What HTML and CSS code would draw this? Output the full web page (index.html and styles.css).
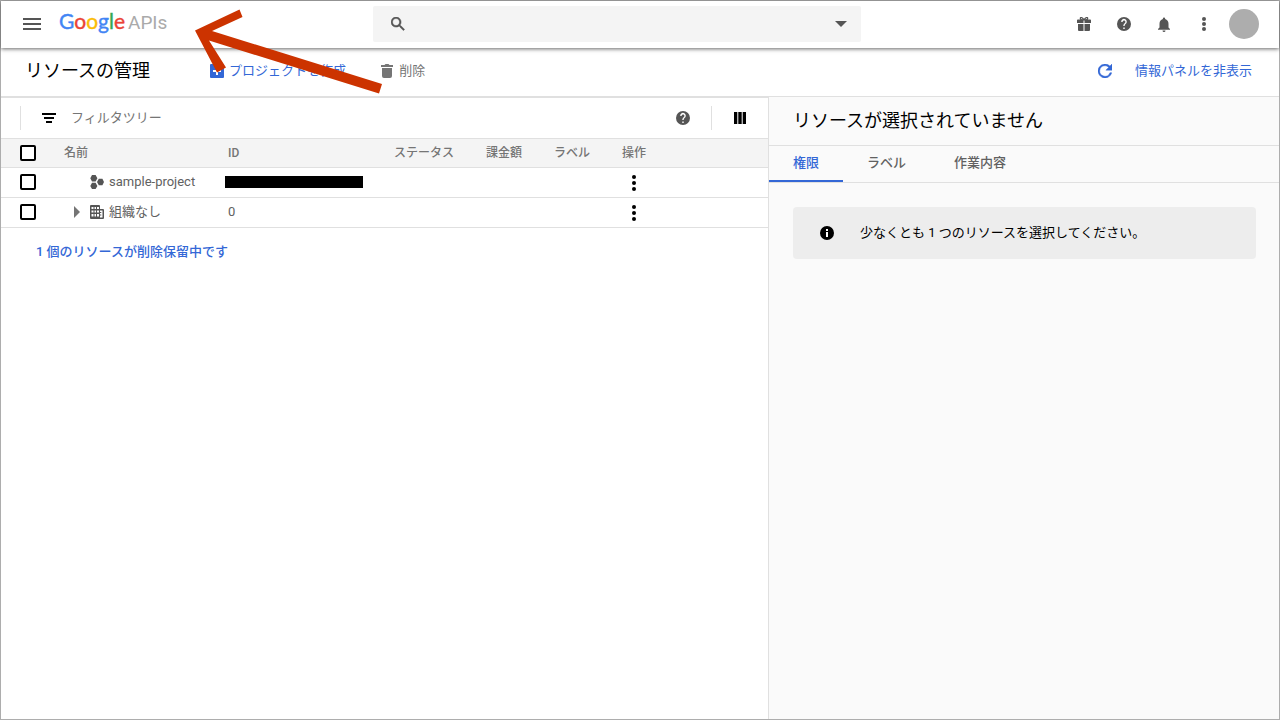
FILE: index.html
```html
<!DOCTYPE html>
<html lang="ja">
<head>
<meta charset="utf-8">
<title>リソースの管理</title>
<link rel="stylesheet" href="styles.css">
</head>
<body>
<div class="app">
  <header class="topbar">
    <div class="brand">
      <button class="icon-btn menu" aria-label="メニュー"><svg width="18" height="12" viewBox="0 0 18 12"><path d="M0 0h18v2H0zM0 5h18v2H0zM0 10h18v2H0z"/></svg></button>
      <a class="logo" href="#"><span class="google"><span class="blue">G</span><span class="red">o</span><span class="yellow">o</span><span class="blue">g</span><span class="green">l</span><span class="red">e</span></span><span class="apis">APIs</span></a>
    </div>
    <div class="search">
      <svg width="14" height="14" viewBox="3 3 18 18"><path d="M15.5 14h-.79l-.28-.27A6.47 6.47 0 0 0 16 9.500 6.500 6.500 0 1 0 9.500 16c1.610 0 3.090-.590 4.230-1.570l.27.280v.790l5 4.990L20.490 19l-4.990-5zm-6 0C7.010 14 5 11.990 5 9.500S7.010 5 9.500 5 14 7.010 14 9.500 11.990 14 9.500 14z" stroke="#555" stroke-width=".6"/></svg>
      <input class="search-input" type="text" aria-label="検索">
      <button class="icon-btn" aria-label="検索候補"><svg width="12" height="6" viewBox="0 0 12 6"><path d="M0 0h12L6 6z"/></svg></button>
    </div>
    <nav class="tools">
      <button class="icon-btn" aria-label="ギフト"><svg width="14" height="14" viewBox="0 0 14 14"><path d="M.8 2.500h12.400a.8.8 0 0 1 .8.800V6H7.500V3h-1v3H0V3.300a.8.8 0 0 1 .8-.8zM1 7h5.500v7H2a1 1 0 0 1-1-1zM7.500 7H13v6a1 1 0 0 1-1 1H7.500z"/><path d="M7 3C5.800.4 3.300-.2 3.300 1.400 3.300 2.500 4.500 3 7 3zM7 3C8.200.4 10.700-.2 10.700 1.400 10.700 2.500 9.500 3 7 3z" fill="none" stroke="#555" stroke-width="1.200"/></svg></button>
      <button class="icon-btn" aria-label="ヘルプ"><svg width="14" height="14" viewBox="2 2 20 20"><path d="M12 2a10 10 0 1 0 0 20 10 10 0 0 0 0-20zm1 17h-2v-2h2zm2.070-7.750-.9.920C13.450 12.900 13 13.500 13 15h-2v-.5c0-1.100.450-2.100 1.170-2.830l1.240-1.260A2 2 0 1 0 10 9H8a4 4 0 1 1 7.070 2.250z"/></svg></button>
      <button class="icon-btn" aria-label="通知"><svg width="12" height="15" viewBox="4 2 16 20"><path d="M12 22a2 2 0 0 0 2-2h-4a2 2 0 0 0 2 2zm6-6v-5c0-3.070-1.640-5.640-4.500-6.320V4a1.500 1.500 0 0 0-3 0v.680C7.630 5.360 6 7.920 6 11v5l-2 2v1h16v-1z"/></svg></button>
      <button class="icon-btn" aria-label="その他"><svg width="4" height="14" viewBox="0 0 4 14"><circle cx="2" cy="2" r="2"/><circle cx="2" cy="7" r="2"/><circle cx="2" cy="12" r="2"/></svg></button>
      <button class="avatar" aria-label="アカウント"></button>
    </nav>
  </header>

  <div class="actionbar">
    <h1 class="title">リソースの管理</h1>
    <button class="action create"><svg width="14" height="14" viewBox="0 0 14 14"><path d="M1 0h12a1 1 0 0 1 1 1v12a1 1 0 0 1-1 1H1a1 1 0 0 1-1-1V1a1 1 0 0 1 1-1zm5 3v3H3v2h3v3h2V8h3V6H8V3z" fill-rule="evenodd"/></svg>プロジェクトを作成</button>
    <button class="action delete"><svg width="12" height="14" viewBox="0 0 12 14"><path d="M1 4h10v8a2 2 0 0 1-2 2H3a2 2 0 0 1-2-2zM0 1h3.500l1-1h3l1 1H12v2H0z"/></svg>削除</button>
    <button class="action refresh" aria-label="更新"><svg width="14" height="14" viewBox="4 4 16 16"><path d="M17.650 6.350A8 8 0 1 0 19.730 14h-2.080A6 6 0 1 1 12 6c1.660 0 3.140.690 4.220 1.780L13 11h7V4z" stroke="#3367d6" stroke-width=".5"/></svg></button>
    <button class="action">情報パネルを非表示</button>
  </div>

  <div class="content">
    <main class="resources">
      <div class="filterbar">
        <span class="rule"></span>
        <svg class="filter-icon" width="14" height="10" viewBox="0 0 14 10"><path d="M0 0h14v2H0zM2 4h10v2H2zM4 8h6v2H4z"/></svg>
        <input class="filter-input" type="text" placeholder="フィルタツリー" aria-label="フィルタツリー">
        <button class="icon-btn help" aria-label="ヘルプ"><svg width="14" height="14" viewBox="2 2 20 20"><path d="M12 2a10 10 0 1 0 0 20 10 10 0 0 0 0-20zm1 17h-2v-2h2zm2.070-7.750-.9.920C13.450 12.900 13 13.500 13 15h-2v-.5c0-1.100.450-2.100 1.170-2.830l1.240-1.260A2 2 0 1 0 10 9H8a4 4 0 1 1 7.070 2.250z"/></svg></button>
        <span class="rule"></span>
        <button class="icon-btn columns" aria-label="列の表示"><svg width="12" height="12" viewBox="0 0 12 12"><path d="M0 0h3.300v12H0zM4.300 0h3.400v12H4.300zM8.700 0H12v12H8.700z"/></svg></button>
      </div>
      <table class="tree">
        <colgroup><col class="c-check"><col class="c-name"><col class="c-id"><col class="c-status"><col class="c-bill"><col class="c-label"><col></colgroup>
        <thead>
          <tr><th class="check"><input type="checkbox" aria-label="すべて選択"></th><th>名前</th><th>ID</th><th>ステータス</th><th>課金額</th><th>ラベル</th><th>操作</th></tr>
        </thead>
        <tbody>
          <tr>
            <td class="check"><input type="checkbox" aria-label="sample-project を選択"></td>
            <td><div class="name"><span class="toggle"></span><svg width="14" height="14" viewBox="0 0 14 14"><path d="M2 0h3.600l1.800 3.200-1.800 3.200H2L.3 3.200zM8.800 3.800h3.600L14 7l-1.600 3.200H8.800L7 7zM2 7.700h3.600l1.800 3.200L5.600 14H2L.3 10.900z"/></svg>sample-project</div></td>
            <td class="flush"><span class="redacted"></span></td>
            <td></td><td></td><td></td>
            <td><button class="more" aria-label="操作"><svg width="4" height="16" viewBox="0 0 4 16"><circle cx="2" cy="2" r="2"/><circle cx="2" cy="8" r="2"/><circle cx="2" cy="14" r="2"/></svg></button></td>
          </tr>
          <tr>
            <td class="check"><input type="checkbox" aria-label="組織なし を選択"></td>
            <td><div class="name"><button class="toggle" aria-label="展開"><svg width="6" height="12" viewBox="0 0 6 12"><path d="M0 0l6 6-6 6z" fill="#757575"/></svg></button><svg width="14" height="14" viewBox="0 0 14 14"><path d="M1 0h8a1 1 0 0 1 1 1v3h3a1 1 0 0 1 1 1v8a1 1 0 0 1-1 1H1a1 1 0 0 1-1-1V1a1 1 0 0 1 1-1zM1.500 2v2h2V2zM4.500 2v2h1.500V2zM7 2v2h2V2zM1.500 5.500v2h2v-2zM4.500 5.500v2H6v-2zM7 5.500v2h2v-2zM1.500 9v2.500h2V9zM4.500 9v2.500H6V9zM7 9v2.500h2V9zM10 5.500V7h1.300v1H10v1.500h1.300v1H10v2h2.500v-7z" fill-rule="evenodd"/></svg>組織なし</div></td>
            <td>0</td>
            <td></td><td></td><td></td>
            <td><button class="more" aria-label="操作"><svg width="4" height="16" viewBox="0 0 4 16"><circle cx="2" cy="2" r="2"/><circle cx="2" cy="8" r="2"/><circle cx="2" cy="14" r="2"/></svg></button></td>
          </tr>
        </tbody>
      </table>
      <a class="pending" href="#">1 個のリソースが削除保留中です</a>
    </main>

    <aside class="panel">
      <h2 class="panel-title">リソースが選択されていません</h2>
      <div class="tabs" role="tablist">
        <button class="tab active" role="tab" aria-selected="true">権限</button>
        <button class="tab" role="tab" aria-selected="false">ラベル</button>
        <button class="tab" role="tab" aria-selected="false">作業内容</button>
      </div>
      <div class="notice"><svg width="14" height="14" viewBox="0 0 14 14"><circle cx="7" cy="7" r="7"/><path d="M6 3h2v2H6zM6 6h2v5H6z" fill="#fff"/></svg>少なくとも 1 つのリソースを選択してください。</div>
    </aside>
  </div>

  <svg class="arrow" width="200" height="90" viewBox="190 5 200 90"><path d="M196 30.500 240.500 9.500 243.500 17 213 31 383 84 380 93.500 210 40.500 227 67.500 218 72.500z" fill="#c30"/></svg>
</div>
</body>
</html>
```
FILE: styles.css
```css
* {
  box-sizing: border-box;
}

body {
  margin: 0;
  font: 13px/20px Roboto, "Noto Sans CJK JP", sans-serif;
  color: #000;
}

button {
  padding: 0;
  border: 0;
  background: none;
  font: inherit;
  color: inherit;
  cursor: pointer;
}

input[type="text"] {
  flex: 1;
  min-width: 0;
  padding: 0;
  border: 0;
  outline: 0;
  background: none;
  font: inherit;
}

a {
  color: #3367d6;
  text-decoration: none;
}

svg {
  display: block;
  flex: none;
  fill: currentColor;
}

.app {
  position: relative;
  display: flex;
  flex-direction: column;
  min-height: 100vh;
  border: 1px solid #adadad;
  background: #fff;
}

.topbar {
  position: relative;
  display: flex;
  align-items: center;
  height: 47px;
  padding-bottom: 1px;
  color: #555;
  background: #fff;
  box-shadow: 0 1px 4px rgba(0, 0, 0, .6);
}

.brand {
  display: flex;
  flex: none;
  align-items: center;
  gap: 7px;
  width: 372px;
  padding-left: 11px;
}

.icon-btn {
  display: flex;
  flex: none;
  align-items: center;
  justify-content: center;
  width: 40px;
  height: 40px;
}

.logo {
  display: flex;
  align-items: baseline;
  gap: 3px;
  padding-bottom: 4px;
  font: 19px/24px Roboto, sans-serif;
}

.google {
  font-family: Lato, sans-serif;
  font-size: 21px;
  -webkit-text-stroke: 0.4px;
}

.apis {
  color: #aaa;
}

.blue { color: #4285f4; }
.red { color: #ea4335; }
.yellow { color: #fbbc05; }
.green { color: #34a853; }

.search {
  display: flex;
  flex: 0 1 488px;
  align-items: center;
  gap: 12px;
  height: 36px;
  padding-left: 18px;
  border-radius: 2px;
  background: #f4f4f4;
}

.tools {
  display: flex;
  align-items: center;
  margin-left: auto;
  padding-right: 20px;
}

.avatar {
  width: 30px;
  height: 30px;
  margin-left: 5px;
  border-radius: 50%;
  background: #adadad;
}

.actionbar {
  display: flex;
  align-items: center;
  height: 49px;
  padding: 0 27px 2px 24px;
  border-bottom: 1px solid #e0e0e0;
}

.title,
.panel-title {
  margin: 0;
  font-size: 18px;
  font-weight: 400;
  line-height: 24px;
}

.action {
  display: flex;
  align-items: center;
  gap: 5px;
  color: #3367d6;
}

.create {
  margin-left: 60px;
}

.delete {
  gap: 6px;
  margin-left: 35px;
  color: #757575;
}

.refresh {
  margin: 0 23px 0 auto;
}

.content {
  display: flex;
  flex: 1;
}

.resources {
  flex: 1;
  min-width: 0;
  border-top: 1px solid #e0e0e0;
}

.filterbar {
  display: flex;
  align-items: center;
  height: 41px;
  padding-left: 19px;
  border-bottom: 1px solid #e0e0e0;
}

.rule {
  width: 1px;
  height: 24px;
  background: #e0e0e0;
}

.filter-icon {
  margin: 0 15px 0 21px;
}

.filter-input::placeholder {
  color: #757575;
  opacity: 1;
}

.help {
  width: 56px;
  color: #555;
}

.columns {
  width: 56px;
}

.tree {
  width: 100%;
  table-layout: fixed;
  border-spacing: 0;
  color: #616161;
}

.c-check { width: 60px; }
.c-name { width: 164px; }
.c-id { width: 166px; }
.c-status { width: 92px; }
.c-bill { width: 68px; }
.c-label { width: 68px; }

.tree th,
.tree td {
  height: 30px;
  padding: 0 0 1px 3px;
  border-bottom: 1px solid #e0e0e0;
  text-align: left;
}

.tree th {
  height: 29px;
  padding-bottom: 0;
  font-size: 12px;
  font-weight: 500;
  color: #757575;
  background: #f4f4f4;
}

.tree .check {
  padding-left: 19px;
}

.tree .flush {
  padding-left: 0;
}

.check input {
  display: block;
  width: 16px;
  height: 16px;
  margin: 0;
  border: 2px solid #000;
  border-radius: 2px;
  background: #fff;
  appearance: none;
}

.name {
  display: flex;
  align-items: center;
  gap: 5px;
}

.name > svg {
  color: #555;
}

.toggle {
  width: 21px;
  padding-left: 10px;
}

.redacted {
  display: block;
  width: 138px;
  height: 12px;
  background: #000;
}

.more {
  display: block;
  padding: 1px 10px 0;
  color: #000;
}

.pending {
  display: inline-block;
  margin: 14px 35px;
  font-weight: 500;
}

.panel {
  width: 511px;
  border-left: 1px solid #e0e0e0;
  background: #fafafa;
}

.panel-title {
  padding: 12px 24px;
  border-bottom: 1px solid #e0e0e0;
}

.tabs {
  display: flex;
  height: 37px;
  border-bottom: 1px solid #e0e0e0;
}

.tab {
  padding: 0 24px;
  border-bottom: 2px solid transparent;
  color: #616161;
  font-weight: 500;
}

.active {
  border-color: #3367d6;
  color: #3367d6;
}

.notice {
  display: flex;
  align-items: center;
  gap: 26px;
  margin: 24px 23px 24px 24px;
  padding: 16px 27px;
  border-radius: 4px;
  background: #ededed;
}

.arrow {
  position: absolute;
  top: 4px;
  left: 188px;
  pointer-events: none;
}
```
